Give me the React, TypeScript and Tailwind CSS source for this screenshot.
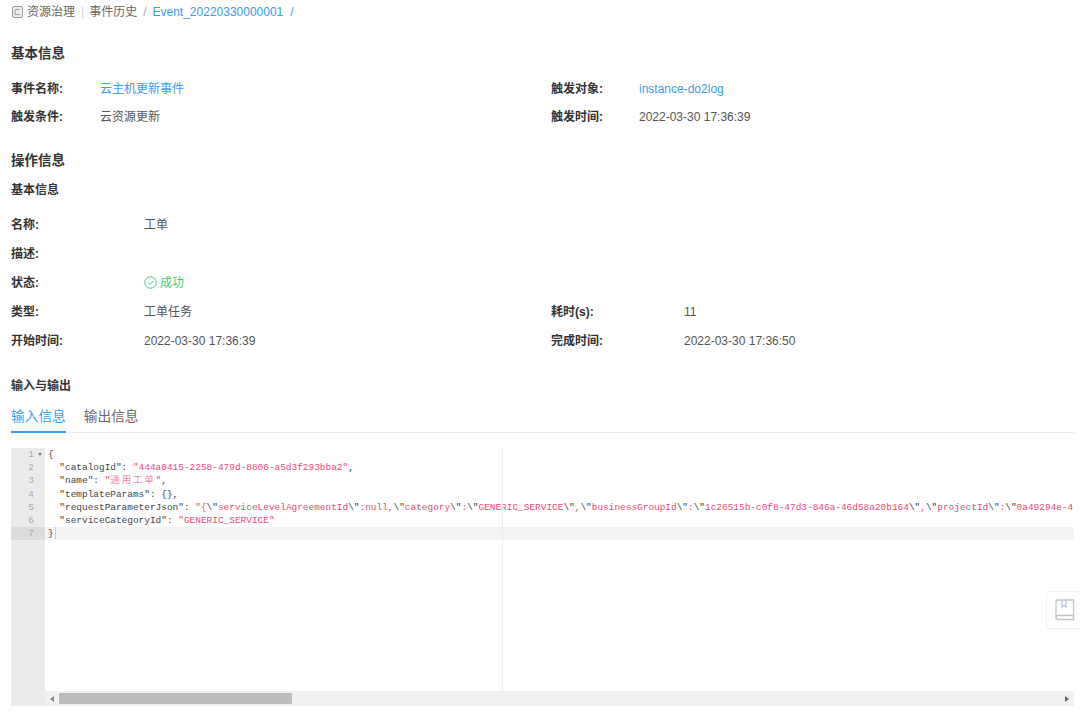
import React from 'react';

const FONT = "font-['Liberation_Sans','Noto_Sans_CJK_SC',sans-serif]";
const MONO = "font-['Liberation_Mono','Noto_Sans_CJK_SC',monospace]";

const Label = ({ children, className = '' }: { children: React.ReactNode; className?: string }) => (
    <div className={`font-bold text-[#333] text-xs shrink-0 ${className}`}>{children}</div>
);

const Row = ({ label, value, width, className = 'h-[29px]', valueClass = 'text-[#555]' }: {
    label: string; value?: React.ReactNode; width: string; className?: string; valueClass?: string;
}) => (
    <div className={`flex items-center ${className}`}>
        <Label className={width}>{label}</Label>
        <div className={`text-xs ${valueClass}`}>{value}</div>
    </div>
);

const Str = ({ children }: { children: React.ReactNode }) => <span className="text-[#ec4a78]">{children}</span>;
const Esc = ({ children }: { children: React.ReactNode }) => <span className="text-[#444]">{children}</span>;

const LINE_NUMBERS = [1, 2, 3, 4, 5, 6, 7];

export default function App() {
    return (
        <div className={`${FONT} relative w-[1080px] h-[713px] overflow-hidden bg-white`}>
            {/* Breadcrumb */}
            <div className="flex items-center h-[23px] pl-[12px] text-xs text-[#666]">
                <svg width="11" height="12" viewBox="0 0 11 12" fill="none" className="mr-[4px]">
                    <rect x="0.5" y="0.5" width="10" height="11" rx="1.5" fill="#eee" stroke="#999" />
                    <path d="M3 8.5V4.5a1 1 0 0 1 1-1h3.5M3 8.5h5" stroke="#999" />
                </svg>
                <span>资源治理</span>
                <span className="ml-[6px] mr-[5px] text-[#ccc]">|</span>
                <span>事件历史</span>
                <span className="mx-[6px] text-[#aaa]">/</span>
                <span className="text-[#3b9cf5]">Event_20220330000001</span>
                <span className="ml-[7px] text-[#3b9cf5]">/</span>
            </div>

            {/* Event info */}
            <div className="px-[11px]">
                <h2 className="font-bold text-[#333] text-[13.5px] mt-[21px] h-[19px] leading-[19px]">基本信息</h2>
                <div className="grid grid-cols-[540px_1fr] mt-[11px]">
                    <Row label="事件名称:" width="w-[89px]" value="云主机更新事件" valueClass="text-[#3b9cf5]" />
                    <Row label="触发对象:" width="w-[88px]" value="instance-do2log" valueClass="text-[#3b9cf5]" />
                    <Row label="触发条件:" width="w-[89px]" value="云资源更新" className="h-[28px]" />
                    <Row label="触发时间:" width="w-[88px]" value="2022-03-30 17:36:39" className="h-[28px]" />
                </div>

                {/* Operation info */}
                <h2 className="font-bold text-[#333] text-[13.5px] mt-[20px] h-[19px] leading-[19px]">操作信息</h2>
                <h3 className="font-bold text-[#333] text-xs mt-[11px] h-[19px] leading-[19px]">基本信息</h3>
                <div className="grid grid-cols-[540px_1fr] mt-[10px]">
                    <Row label="名称:" width="w-[133px]" value="工单" className="col-span-2 h-[29px]" />
                    <Row label="描述:" width="w-[133px]" className="col-span-2 h-[29px]" />
                    <Row
                        label="状态:"
                        width="w-[133px]"
                        className="col-span-2 h-[29px]"
                        valueClass="text-[#3ccf7e]"
                        value={
                            <span className="flex items-center gap-[3px]">
                                <svg width="13" height="13" viewBox="0 0 13 13" fill="none" stroke="#3ccf7e">
                                    <circle cx="6.5" cy="6.5" r="5.7" />
                                    <path d="M3.8 6.6l2 2 3.5-3.8" />
                                </svg>
                                成功
                            </span>
                        }
                    />
                    <Row label="类型:" width="w-[133px]" value="工单任务" />
                    <Row label="耗时(s):" width="w-[133px]" value="11" />
                    <Row label="开始时间:" width="w-[133px]" value="2022-03-30 17:36:39" />
                    <Row label="完成时间:" width="w-[133px]" value="2022-03-30 17:36:50" />
                </div>

                {/* Input / output */}
                <h3 className="font-bold text-[#333] text-xs mt-[22px] h-[19px] leading-[19px]">输入与输出</h3>
                <div className="flex gap-[18px] mt-[7px] w-[1063px] h-[30px] border-b border-[#e8e8e8] text-[13.7px]">
                    <div className="h-[30px] leading-[27px] text-[#3b9cf5] border-b-2 border-[#3b9cf5]">输入信息</div>
                    <div className="leading-[27px] text-[#666]">输出信息</div>
                </div>

                {/* Code editor */}
                <div className={`${MONO} relative flex w-[1063px] h-[258px] mt-[15px] text-[9.45px] leading-[13.2px] overflow-hidden`}>
                    <div className="w-[34px] shrink-0 bg-[#ebebeb] text-[#aaa] text-right">
                        {LINE_NUMBERS.map(n => (
                            <div key={n} className={`h-[13.2px] pr-[11px] ${n === 7 ? 'bg-[#dcdcdc]' : ''}`}>
                                {n}
                                {n === 1 && <span className="absolute left-[27px] top-[5px] border-x-[2.5px] border-x-transparent border-t-[3px] border-t-[#777]" />}
                            </div>
                        ))}
                    </div>
                    <div className="flex-1 min-w-0 flex flex-col">
                        <div className="flex-1 relative pl-[3px] whitespace-pre text-[#444] overflow-hidden">
                            <div className="absolute left-[457px] top-0 bottom-0 w-px bg-[#eeeeee]" />
                            <div className="h-[13.2px]">{'{'}</div>
                            <div className="h-[13.2px]">{'  "catalogId": '}<Str>"444a0415-2258-479d-8806-a5d3f293bba2"</Str>,</div>
                            <div className="h-[13.2px]">{'  "name": '}<Str>"<span className="tracking-[1.9px] text-[#f08aa8]">通用工单</span>"</Str>,</div>
                            <div className="h-[13.2px]">{'  "templateParams": {},'}</div>
                            <div className="h-[13.2px]">
                                {'  "requestParameterJson": '}
                                <Str>"{'{'}</Str><Esc>\"</Esc><Str>serviceLevelAgreementId</Str><Esc>\"</Esc><Str>:null,</Str>
                                <Esc>\"</Esc><Str>category</Str><Esc>\"</Esc><Str>:</Str><Esc>\"</Esc><Str>GENERIC_SERVICE</Str><Esc>\"</Esc><Str>,</Str>
                                <Esc>\"</Esc><Str>businessGroupId</Str><Esc>\"</Esc><Str>:</Str><Esc>\"</Esc><Str>1c26515b-c0f8-47d3-846a-46d58a20b164</Str><Esc>\"</Esc><Str>,</Str>
                                <Esc>\"</Esc><Str>projectId</Str><Esc>\"</Esc><Str>:</Str><Esc>\"</Esc><Str>0a49294e-4</Str>
                            </div>
                            <div className="h-[13.2px]">{'  "serviceCategoryId": '}<Str>"GENERIC_SERVICE"</Str></div>
                            <div className="h-[13.2px] -ml-[3px] pl-[3px] bg-[#f4f4f4]">{'}'}<span className="inline-block w-px h-[12px] ml-[1px] align-top bg-[#ccc]" /></div>
                        </div>
                        {/* Horizontal scrollbar */}
                        <div className="flex items-center h-[15px] shrink-0 bg-[#f1f1f1]">
                            <div className="w-[14px] flex justify-center">
                                <span className="border-y-[3px] border-y-transparent border-r-[4px] border-r-[#888]" />
                            </div>
                            <div className="w-[233px] h-[11px] bg-[#bcbcbc]" />
                            <div className="flex-1 flex justify-end pr-[5px]">
                                <span className="border-y-[3px] border-y-transparent border-l-[4px] border-l-[#666]" />
                            </div>
                        </div>
                    </div>
                </div>
            </div>

            {/* Floating help button */}
            <div className="absolute left-[1046px] top-[591px] w-[40px] h-[38px] bg-white border border-[#f2f2f2] rounded-[4px] flex items-center pl-[8px]">
                <svg width="20" height="22" viewBox="0 0 20 22" fill="none" stroke="#c4c4c4" strokeWidth="1.3">
                    <path d="M1 18V2.500A1.500 1.500 0 0 1 2.500 1H18.500V16.500H3A2 2 0 0 0 1 18.500A2 2 0 0 0 3 20.500H18.500V16.500" />
                    <path d="M7 1V8L9 6.500L11 8V1" stroke="#b9c4d6" />
                </svg>
            </div>
        </div>
    );
}
